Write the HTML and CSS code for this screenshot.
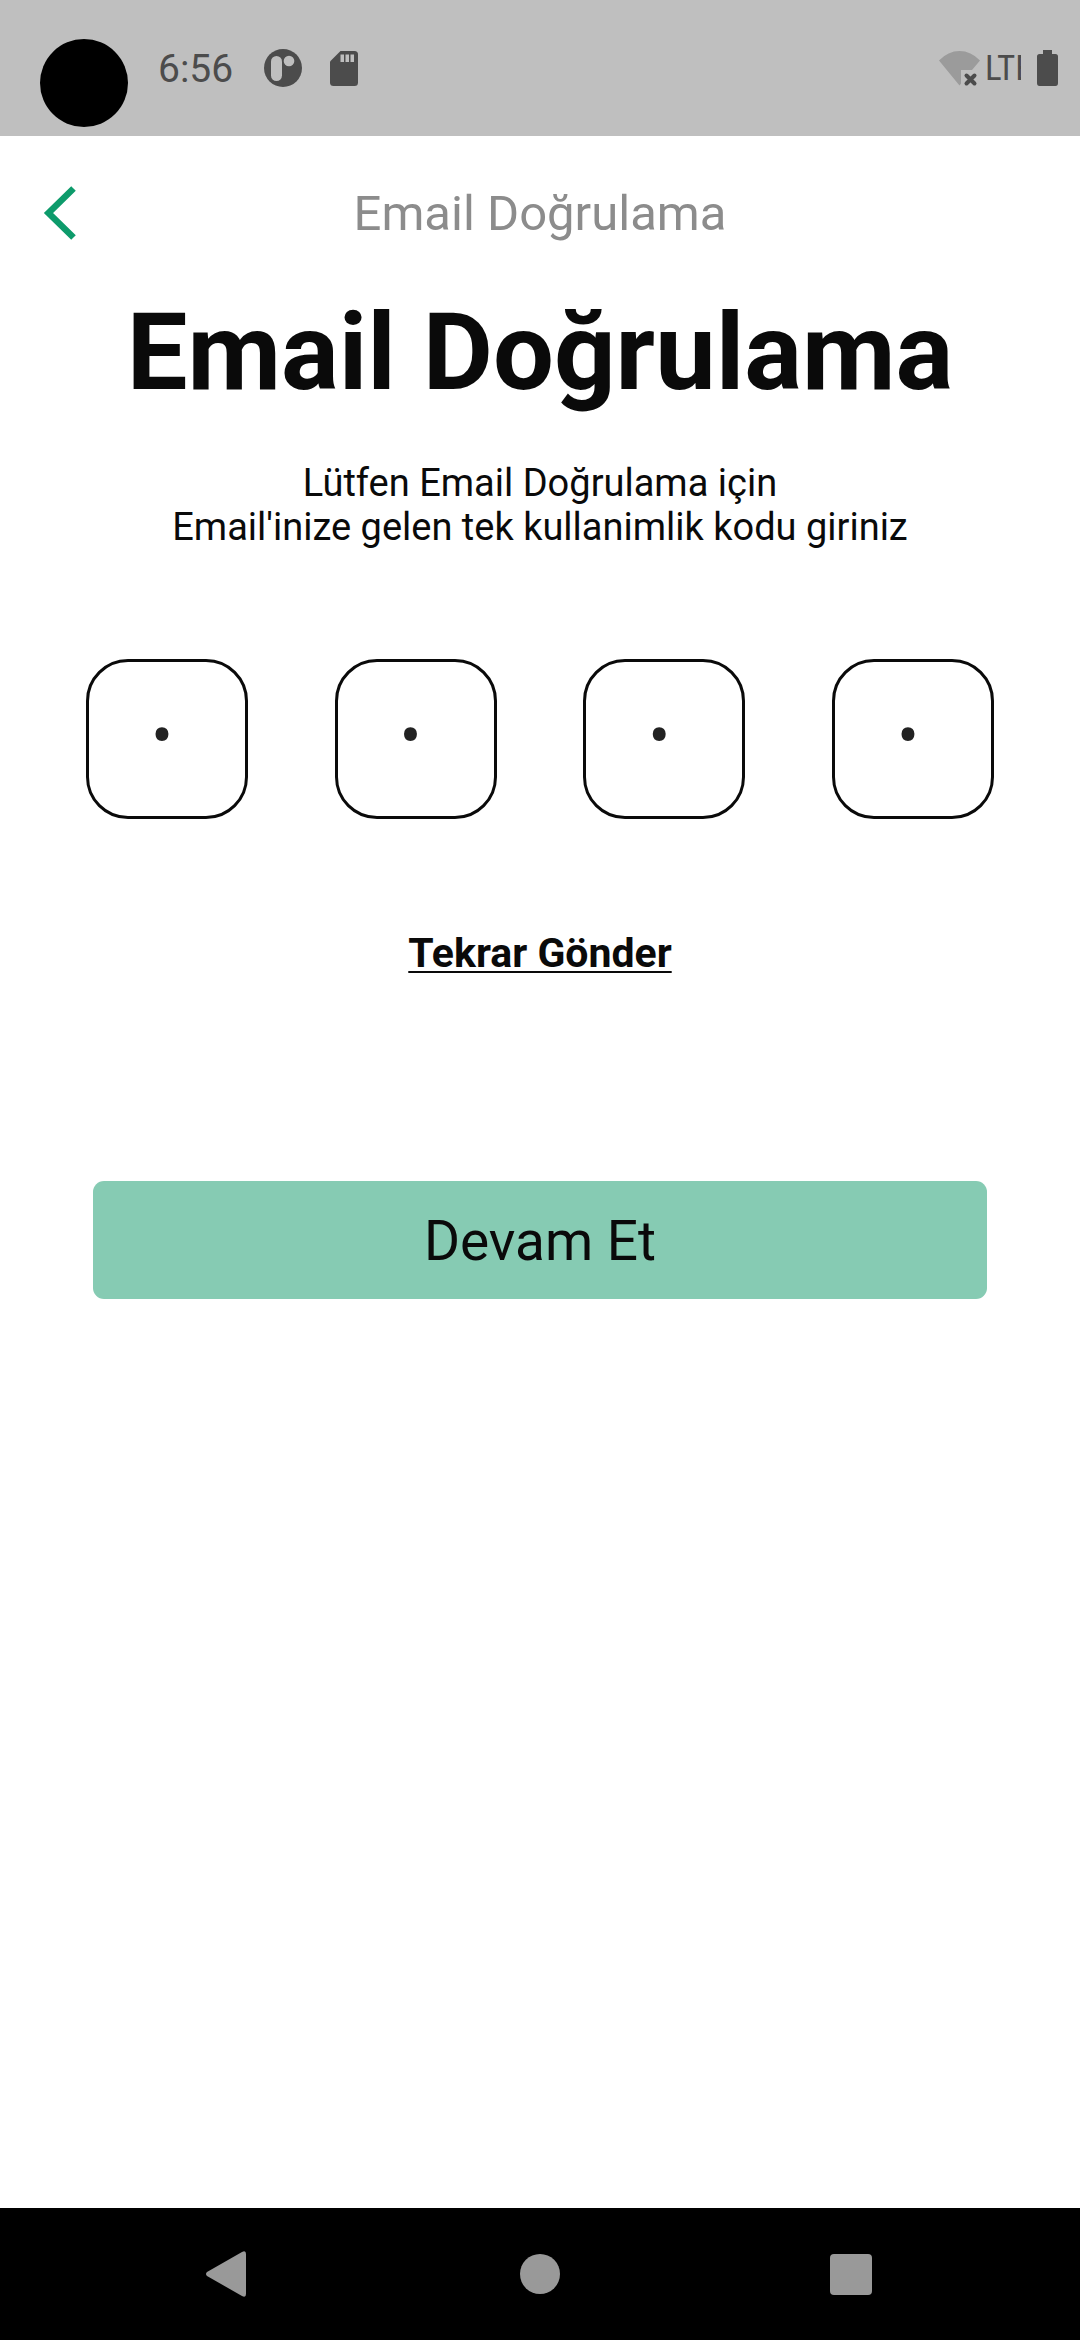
FILE: index.html
```html
<!DOCTYPE html>
<html lang="tr">
<head>
<meta charset="utf-8">
<meta name="viewport" content="width=device-width, initial-scale=1">
<title>Email Doğrulama</title>
<link rel="stylesheet" href="styles.css">
</head>
<body>
<div class="status-bar">
  <div class="status-group">
    <span class="camera"></span>
    <time class="clock">6:56</time>
    <svg class="icon-app" viewBox="0 0 38 38" aria-hidden="true"><circle cx="19" cy="19" r="19" fill="#4c4c4c"/><rect x="7" y="7" width="11" height="25" rx="5.500" fill="#bfbfbf"/><circle cx="25" cy="12" r="5.3" fill="#bfbfbf"/></svg>
    <svg class="icon-card" viewBox="0 0 28 35" aria-hidden="true"><path d="M10.500 0H24.500Q28 0 28 3.500V31.500Q28 35 24.500 35H3.500Q0 35 0 31.500V10.500Z" fill="#4c4c4c"/><path d="M10.500 3.500h3.500v7.500h-3.500zM15.500 3.500h3.500v7.500h-3.500zM20.500 3.500h3.500v7.500h-3.500z" fill="#bfbfbf"/></svg>
  </div>
  <div class="status-group status-right">
    <svg class="icon-wifi" viewBox="0 0 42 35" aria-hidden="true"><path d="M0 9.500Q9 0 20.500 0T41 9.500L33 19H22V32.500L20.500 34.500Z" fill="#9b9b9b"/><path d="M27.500 24.500l8 8M35.500 24.500l-8 8" stroke="#4c4c4c" stroke-width="4" stroke-linecap="round"/></svg>
    <span class="network">LTE</span>
    <svg class="icon-battery" viewBox="0 0 21 36" aria-hidden="true"><path d="M6 0h9v4h3.500Q21 4 21 6.500V33Q21 36 18.500 36H2.500Q0 36 0 33V6.500Q0 4 2.500 4H6Z" fill="#4c4c4c"/></svg>
  </div>
</div>

<header class="app-bar">
  <button class="back" type="button" aria-label="Geri"><svg viewBox="0 0 32 54" aria-hidden="true"><path d="M29.500 2.500L4.500 27L29.500 51.500" fill="none" stroke="#0d9b6b" stroke-width="6.500"/></svg></button>
  <span class="app-title">Email Doğrulama</span>
</header>

<main class="content">
  <h1 class="heading">Email Doğrulama</h1>
  <p class="hint">Lütfen Email Doğrulama için<br>Email'inize gelen tek kullanimlik kodu giriniz</p>
  <form class="form">
    <div class="code">
      <input class="digit" type="text" value="•" aria-label="Kod hanesi 1">
      <input class="digit" type="text" value="•" aria-label="Kod hanesi 2">
      <input class="digit" type="text" value="•" aria-label="Kod hanesi 3">
      <input class="digit" type="text" value="•" aria-label="Kod hanesi 4">
    </div>
    <a class="resend" href="#">Tekrar Gönder</a>
    <button class="submit" type="submit">Devam Et</button>
  </form>
</main>

<nav class="nav-bar">
  <button class="nav-button" type="button" aria-label="Geri"><svg class="nav-icon" viewBox="0 0 46 46" aria-hidden="true"><path d="M3 21L38 1Q42 -1 42 3V43Q42 47 38 45L3 25Q1 23 3 21Z" fill="#999"/></svg></button>
  <button class="nav-button" type="button" aria-label="Ana ekran"><svg class="nav-icon" viewBox="0 0 46 46" aria-hidden="true"><circle cx="23" cy="23" r="20" fill="#999"/></svg></button>
  <button class="nav-button" type="button" aria-label="Son uygulamalar"><svg class="nav-icon" viewBox="0 0 46 46" aria-hidden="true"><rect x="0" y="3" width="42" height="41" rx="4" fill="#999"/></svg></button>
</nav>
</body>
</html>
```

FILE: styles.css
```css
* { box-sizing: border-box; }

body {
  margin: 0;
  min-height: 100vh;
  display: flex;
  flex-direction: column;
  background: #fff;
  color: #0a0a0a;
  font-family: Roboto, "Noto Sans", sans-serif;
}

button { border: 0; padding: 0; background: none; color: inherit; font-family: inherit; }
svg { display: block; overflow: visible; }

.status-bar {
  height: 136px;
  padding: 0 22px 0 40px;
  display: flex;
  justify-content: space-between;
  background: #bfbfbf;
  color: #4c4c4c;
}
.status-group { display: flex; align-items: center; }
.status-right { gap: 4px; }
.camera { width: 88px; height: 88px; margin: 30px 30px 0 0; border-radius: 50%; background: #000; }
.clock { margin-right: 31px; padding-top: 2px; font-size: 39px; line-height: 46px; }
.icon-app { width: 38px; height: 38px; margin-right: 28px; }
.icon-card { width: 28px; height: 35px; }
.icon-wifi { width: 42px; height: 35px; }
.network { width: 36px; margin-right: 12px; padding-top: 2px; overflow: hidden; font-family: "Roboto Condensed", "Liberation Sans Narrow", Roboto, sans-serif; font-size: 35px; line-height: 42px; }
.icon-battery { width: 21px; height: 36px; }

.app-bar {
  height: 154px;
  padding: 0 44px;
  display: grid;
  grid-template-columns: 1fr auto 1fr;
  align-items: center;
}
.back { width: 32px; height: 54px; }
.app-title { padding-top: 2px; color: #8c8c8c; font-size: 49px; line-height: 60px; }

.content { flex: 1; padding: 19px 86px 0; text-align: center; }
.heading { margin: 0; padding-bottom: 20px; overflow: hidden; font-size: 108px; line-height: 86px; font-weight: 700; }
.hint { margin: 46px 0 0; font-size: 38px; line-height: 44px; }

.form { display: flex; flex-direction: column; align-items: center; }
.code { align-self: stretch; margin-top: 110px; display: flex; justify-content: space-between; }
.digit {
  width: 162px;
  height: 160px;
  padding: 0 10px 6px 0;
  border: 3px solid #0a0a0a;
  border-radius: 42px;
  background: #fff;
  color: #222;
  font-family: inherit;
  font-size: 64px;
  text-align: center;
}
.resend {
  margin-top: 110px;
  color: inherit;
  font-size: 41px;
  line-height: 48px;
  font-weight: 700;
  text-decoration: underline;
  text-decoration-thickness: 2px;
  text-underline-offset: 4px;
}
.submit {
  width: calc(100% - 14px);
  height: 118px;
  margin-top: 204px;
  padding-top: 2px;
  border-radius: 11px;
  background: #86cbb3;
  font-size: 55px;
  line-height: 66px;
}

.nav-bar {
  height: 132px;
  padding: 0 70px;
  display: grid;
  grid-template-columns: repeat(3, 1fr);
  background: #000;
}
.nav-button { display: flex; align-items: center; justify-content: center; }
.nav-icon { width: 46px; height: 46px; }
```
